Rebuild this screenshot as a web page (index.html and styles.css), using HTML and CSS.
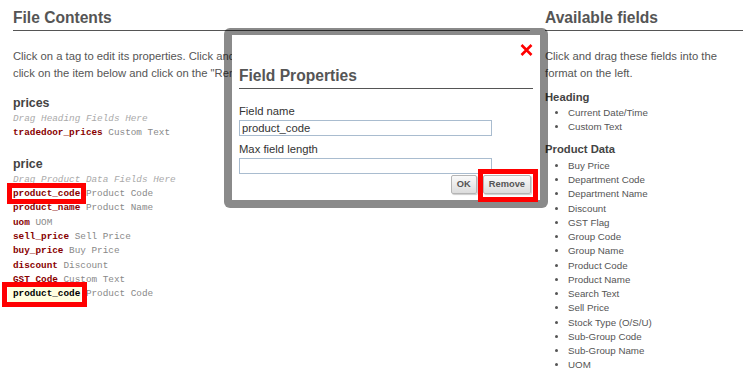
FILE: index.html
```html
<!DOCTYPE html>
<html lang="en">
<head>
  <meta charset="UTF-8" />
  <title>Edit File Format</title>
  <link rel="stylesheet" href="styles.css">
</head>
<body>

<div class="page">
  <div class="col-main">
    <h2>File Contents</h2>
    <p class="intro">Click on a tag to edit its properties. Click and drag a tag to change its position. To remove a tag,<br>
      click on the item below and click on the "Remove" button.</p>

    <div class="section">
      <h3>prices</h3>
      <div class="hint">Drag Heading Fields Here</div>
      <div class="tag"><span class="code">tradedoor_prices</span> Custom Text</div>
    </div>

    <div class="section">
      <h3>price</h3>
      <div class="hint">Drag Product Data Fields Here</div>
      <div class="tag"><span class="code marked">product_code</span> Product Code</div>
      <div class="tag"><span class="code">product_name</span> Product Name</div>
      <div class="tag"><span class="code">uom</span> UOM</div>
      <div class="tag"><span class="code">sell_price</span> Sell Price</div>
      <div class="tag"><span class="code">buy_price</span> Buy Price</div>
      <div class="tag"><span class="code">discount</span> Discount</div>
      <div class="tag"><span class="code">GST Code</span> Custom Text</div>
      <div class="tag"><span class="code selected">product_code</span> Product Code</div>
    </div>
  </div>

  <div class="col-side">
    <h2>Available fields</h2>
    <p class="intro">Click and drag these fields into the format on the left.</p>

    <h4>Heading</h4>
    <ul class="fields">
      <li>Current Date/Time</li>
      <li>Custom Text</li>
    </ul>

    <h4>Product Data</h4>
    <ul class="fields">
      <li>Buy Price</li>
      <li>Department Code</li>
      <li>Department Name</li>
      <li>Discount</li>
      <li>GST Flag</li>
      <li>Group Code</li>
      <li>Group Name</li>
      <li>Product Code</li>
      <li>Product Name</li>
      <li>Search Text</li>
      <li>Sell Price</li>
      <li>Stock Type (O/S/U)</li>
      <li>Sub-Group Code</li>
      <li>Sub-Group Name</li>
      <li>UOM</li>
    </ul>
  </div>
</div>

<div class="dialog">
  <a class="close" href="#" title="Close">
    <svg width="13" height="12" viewBox="0 0 13 12"><path d="M1.5 1 L11.5 11 M11.5 1 L1.5 11" stroke="#f00" stroke-width="2.6" fill="none"/></svg>
  </a>
  <h2>Field Properties</h2>
  <label for="fieldName">Field name</label>
  <input type="text" id="fieldName" value="product_code">
  <label for="maxLen" class="second">Max field length</label>
  <input type="text" id="maxLen">
  <div class="actions">
    <button>OK</button>
    <button class="marked">Remove</button>
  </div>
</div>

</body>
</html>
```

FILE: styles.css
```css
body {
  margin: 0;
  font-family: "Liberation Sans", Arial, sans-serif;
  color: #555;
  background: #fff;
}
.page {
  display: grid;
  grid-template-columns: 517px 198px;
  column-gap: 15px;
  padding: 9px 0 0 13px;
}
h2 {
  font-size: 15.6px;
  line-height: 18px;
  margin: 0;
  padding-bottom: 3px;
  border-bottom: 1px solid #555;
  color: #555;
}
.intro {
  font-size: 11.25px;
  line-height: 17px;
  margin: 16.5px 0 0;
}
.section { margin-top: 14.5px; }
.section + .section { margin-top: 17px; }
h3 {
  font-size: 12.4px;
  line-height: 15.6px;
  margin: 0;
  color: #444;
}
.hint, .tag {
  font-family: "Liberation Mono", "Courier New", monospace;
  font-size: 9.36px;
  line-height: 14.3px;
  white-space: nowrap;
}
.hint { color: #aaa; font-style: italic; }
.tag { color: #888; }
.code {
  color: #800;
  font-weight: bold;
  position: relative;
}
.code.marked::after {
  content: '';
  position: absolute;
  top: -5px;
  bottom: -5px;
  left: -6px;
  right: -6px;
  border: 5px solid #f00;
}
.code.selected {
  color: #000;
  background: #ffffe0;
  padding: 1px 1px 3px 5px;
  margin-left: -5px;
  margin-right: -1px;
}
.code.selected::after {
  content: '';
  position: absolute;
  top: -5px;
  bottom: -5px;
  left: -6px;
  right: -5.5px;
  border: 5.5px solid #f00;
}
h4 {
  font-size: 11.25px;
  line-height: 15.6px;
  margin: 8.6px 0 0;
  color: #444;
}
.fields + h4 { margin-top: 8px; }
.fields {
  margin: 0;
  padding-left: 23px;
  font-size: 9.75px;
  line-height: 14.25px;
}
.fields + h4 + .fields { margin-top: 1px; }

.dialog {
  position: absolute;
  left: 224px;
  top: 28px;
  width: 324px;
  height: 180px;
  box-sizing: border-box;
  border: 8px solid rgba(0, 0, 0, 0.46);
  border-top-width: 7px;
  border-radius: 6px;
  background: #fff;
  background-clip: padding-box;
  padding: 32px 7px 0;
}
.dialog .close {
  position: absolute;
  top: 9px;
  right: 7px;
  line-height: 0;
}
.dialog label {
  display: block;
  font-size: 11.25px;
  line-height: 15px;
  color: #333;
  margin-top: 15px;
}
.dialog label.second { margin-top: 5.5px; }
.dialog input {
  display: block;
  box-sizing: border-box;
  width: 253px;
  height: 16px;
  margin: 1px 0 0;
  padding: 0 2px;
  border: 1px solid #a9bccf;
  font-family: "Liberation Sans", Arial, sans-serif;
  font-size: 11.25px;
  color: #333;
  outline: none;
}
.actions {
  display: flex;
  justify-content: flex-end;
  gap: 6px;
  margin-top: 1px;
  padding-right: 2px;
}
.actions button {
  position: relative;
  height: 19px;
  min-width: 26px;
  padding: 0 5px;
  border: 1px solid #b5b5b5;
  border-radius: 2px;
  background: linear-gradient(#fafafa, #dcdcdc);
  box-shadow: 1px 1px 1px rgba(0, 0, 0, 0.2);
  font-family: "Liberation Sans", Arial, sans-serif;
  font-size: 9.3px;
  font-weight: bold;
  color: #555;
}
.actions button.marked::after {
  content: '';
  position: absolute;
  top: -6.5px;
  bottom: -9.5px;
  left: -6px;
  right: -7.5px;
  border: 5px solid #f00;
}
```
